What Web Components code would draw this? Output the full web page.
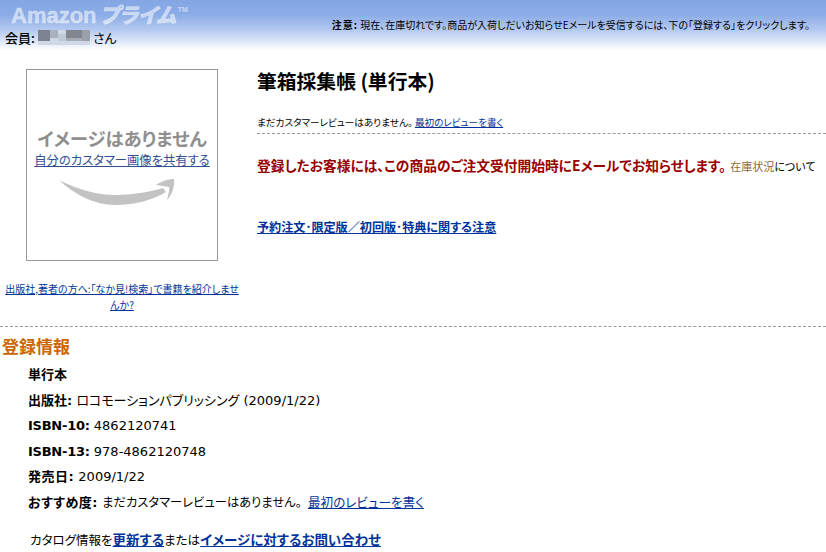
<!DOCTYPE html>
<html lang="ja">
<head>
<meta charset="utf-8">
<title>筆箱採集帳</title>
<style>
  html, body { margin: 0; padding: 0; background: #fff; }
  body { width: 826px; height: 552px; overflow: hidden; font-family: "Liberation Sans", "Noto Sans CJK JP", sans-serif; color: #000; font-feature-settings: "palt"; }
</style>
</head>
<body>
<prime-header></prime-header>
<product-summary></product-summary>
<product-details></product-details>

<script>
const LINK_CSS = `
  a { color: #003399; text-decoration: underline; }
`;

class PrimeHeader extends HTMLElement {
  constructor() {
    super();
    this.attachShadow({ mode: 'open' });
    this.shadowRoot.innerHTML = `
      <style>
        :host {
          display: flex;
          justify-content: space-between;
          height: 50px;
          background: linear-gradient(#84a7e4 0, #8aabe6 14px, #b4c9ef 30px, #e6edfa 44px, #fff 50px);
        }
        .left { padding-left: 5px; }
        .logo {
          display: flex;
          height: 30px;
          padding-left: 6px;
          font: bold 22px/32px "Liberation Sans", "Noto Sans CJK JP", sans-serif;
          font-feature-settings: "palt";
          color: rgba(255,255,255,.55);
          -webkit-text-stroke: .4px rgba(255,255,255,.55);
          white-space: nowrap;
        }
        .logo i { margin-left: 3px; font-size: 21px; font-weight: 900; }
        .logo sup { font-size: 7px; line-height: 20px; margin-left: 2px; -webkit-text-stroke: 0; }
        .member {
          display: flex;
          align-items: center;
          gap: 3px;
          font: 13px/14px "Noto Sans CJK JP", sans-serif;
          font-feature-settings: "palt";
        }
        .member b { font-weight: 500; }
        .notice {
          padding: 18px 16px 0 0;
          font: 10px/14px "Noto Sans CJK JP", sans-serif;
          font-feature-settings: "palt";
        }
        .notice b { letter-spacing: 1px; }
      </style>
      <div class="left">
        <div class="logo">Amazon<i>プライム</i><sup>TM</sup></div>
        <div class="member">
          <b>会員:</b>
          <svg width="52" height="15" viewBox="0 0 13 4" preserveAspectRatio="none" shape-rendering="crispEdges">
            <rect width="13" height="4" fill="#d0d8e6"/>
            <rect x="0" y="0" width="3" height="3" fill="#7d8290"/>
            <rect x="3" y="0" width="2" height="2" fill="#a9b0be"/>
            <rect x="5" y="1" width="2" height="2" fill="#bccbd6"/>
            <rect x="7" y="0" width="4" height="2" fill="#82868f"/>
            <rect x="7" y="2" width="4" height="1" fill="#a5abb5"/>
            <rect x="11" y="0" width="2" height="3" fill="#9a9fa8"/>
          </svg>
          <span>さん</span>
        </div>
      </div>
      <div class="notice"><b>注意:</b> 現在、在庫切れです。商品が入荷しだいお知らせEメールを受信するには、下の「登録する」をクリックします。</div>
    `;
  }
}

class NoImage extends HTMLElement {
  constructor() {
    super();
    this.attachShadow({ mode: 'open' });
    this.shadowRoot.innerHTML = `
      <style>
        :host {
          display: flex;
          flex-direction: column;
          align-items: center;
          box-sizing: border-box;
          width: 192px;
          height: 192px;
          padding-top: 57px;
          border: 1px solid #999;
          font-family: "Noto Sans CJK JP", sans-serif;
        }
        .none { font: bold 18.4px/22px "Noto Sans CJK JP", sans-serif; font-feature-settings: "palt"; color: #8f8f8f; white-space: nowrap; }
        a { font-size: 12.3px; line-height: 22px; color: #2f4f8f; white-space: nowrap; }
        svg { margin-top: 7px; margin-right: 11px; }
      </style>
      <div class="none">イメージはありません</div>
      <a href="#">自分のカスタマー画像を共有する</a>
      <svg width="116" height="28" viewBox="0 0 116 28">
        <path d="M0 2C18 11 38 17 56 17C74 17 90 14 104 10L107 14C92 23 74 27 56 27C36 27 16 17 0 2Z" fill="#c3c3c3"/>
        <path d="M97 7C103 3 110 1 115 1C116 8 113 17 108 22C109 17 111 12 110 9C106 8 101 8 97 7Z" fill="#c3c3c3"/>
      </svg>
    `;
  }
}

class ProductSummary extends HTMLElement {
  constructor() {
    super();
    this.attachShadow({ mode: 'open' });
    this.shadowRoot.innerHTML = `
      <style>
        ${LINK_CSS}
        :host {
          display: flex;
          height: 276px;
          border-bottom: 1px dashed #999;
          font-family: "Noto Sans CJK JP", sans-serif;
        }
        .side {
          box-sizing: border-box;
          width: 257px;
          padding: 19px 0 0 26px;
        }
        .publisher {
          width: 236px;
          margin: 20px 0 0 -22px;
          font-size: 10px;
          line-height: 16px;
          text-align: center;
        }
        .main { flex: 1; padding-top: 17px; }
        h1 { margin: 0; font: bold 19.8px/28px "Noto Sans CJK JP", sans-serif; }
        .reviews {
          margin-top: 19px;
          padding-bottom: 3px;
          border-bottom: 1px dashed #999;
          font-size: 9.6px;
          line-height: 16px;
        }
        .status {
          margin-top: 21px;
          font-size: 11px;
          line-height: 20px;
          white-space: nowrap;
        }
        .status b { font-size: 13.75px; color: #990000; }
        .status span { margin-left: 2px; color: #8a6a3a; }
        .terms {
          margin-top: 42px;
          font-size: 12.1px;
          font-weight: bold;
          line-height: 18px;
        }
      </style>
      <div class="side">
        <no-image></no-image>
        <div class="publisher"><a href="#">出版社,著者の方へ:「なか見!検索」で書籍を紹介しませんか?</a></div>
      </div>
      <div class="main">
        <h1>筆箱採集帳 (単行本)</h1>
        <div class="reviews">まだカスタマーレビューはありません。 <a href="#">最初のレビューを書く</a></div>
        <div class="status"><b>登録したお客様には、この商品のご注文受付開始時にEメールでお知らせします。</b> <span>在庫状況</span>について</div>
        <div class="terms"><a href="#">予約注文･限定版／初回版･特典に関する注意</a></div>
      </div>
    `;
  }
}

class DetailRow extends HTMLElement {
  constructor() {
    super();
    this.attachShadow({ mode: 'open' });
    this.shadowRoot.innerHTML = `
      <style>
        :host { display: block; height: 25.6px; line-height: 25px; white-space: nowrap; }
      </style>
      <slot></slot>
    `;
  }
}

class ProductDetails extends HTMLElement {
  constructor() {
    super();
    this.attachShadow({ mode: 'open' });
    this.shadowRoot.innerHTML = `
      <style>
        ${LINK_CSS}
        :host {
          display: block;
          padding: 8px 0 0 2px;
          font-family: "DejaVu Sans", "Noto Sans CJK JP", sans-serif;
          font-size: 13px;
        }
        h2 { margin: 0; font: bold 17px/22px "Noto Sans CJK JP", sans-serif; color: #cc6600; }
        .rows { padding: 5px 0 0 26px; }
        .k { letter-spacing: .5px; }
        .n { letter-spacing: -.25px; }
        .small { font-size: 12.3px; }
        .first-review { margin-left: 2px; font-size: 12.6px; }
        .catalog { margin: 14px 0 0 28px; font-size: 12.5px; line-height: 20px; white-space: nowrap; }
        .catalog a { font-size: 13.5px; font-weight: bold; }
      </style>
      <h2>登録情報</h2>
      <div class="rows">
        <detail-row><b>単行本</b></detail-row>
        <detail-row><b>出版社:</b> ロコモーションパブリッシング (2009/1/22)</detail-row>
        <detail-row><b class="n">ISBN-10:</b> 4862120741</detail-row>
        <detail-row><b class="n">ISBN-13:</b> 978-4862120748</detail-row>
        <detail-row><b class="k">発売日:</b> 2009/1/22</detail-row>
        <detail-row><b class="k">おすすめ度:</b> <span class="small">まだカスタマーレビューはありません。</span> <a href="#" class="first-review">最初のレビューを書く</a></detail-row>
      </div>
      <div class="catalog">カタログ情報を<a href="#">更新する</a>または<a href="#">イメージに対するお問い合わせ</a></div>
    `;
  }
}

// children first so the shadow roots upgrade in one pass
customElements.define('no-image', NoImage);
customElements.define('detail-row', DetailRow);
customElements.define('prime-header', PrimeHeader);
customElements.define('product-summary', ProductSummary);
customElements.define('product-details', ProductDetails);
</script>
</body>
</html>
